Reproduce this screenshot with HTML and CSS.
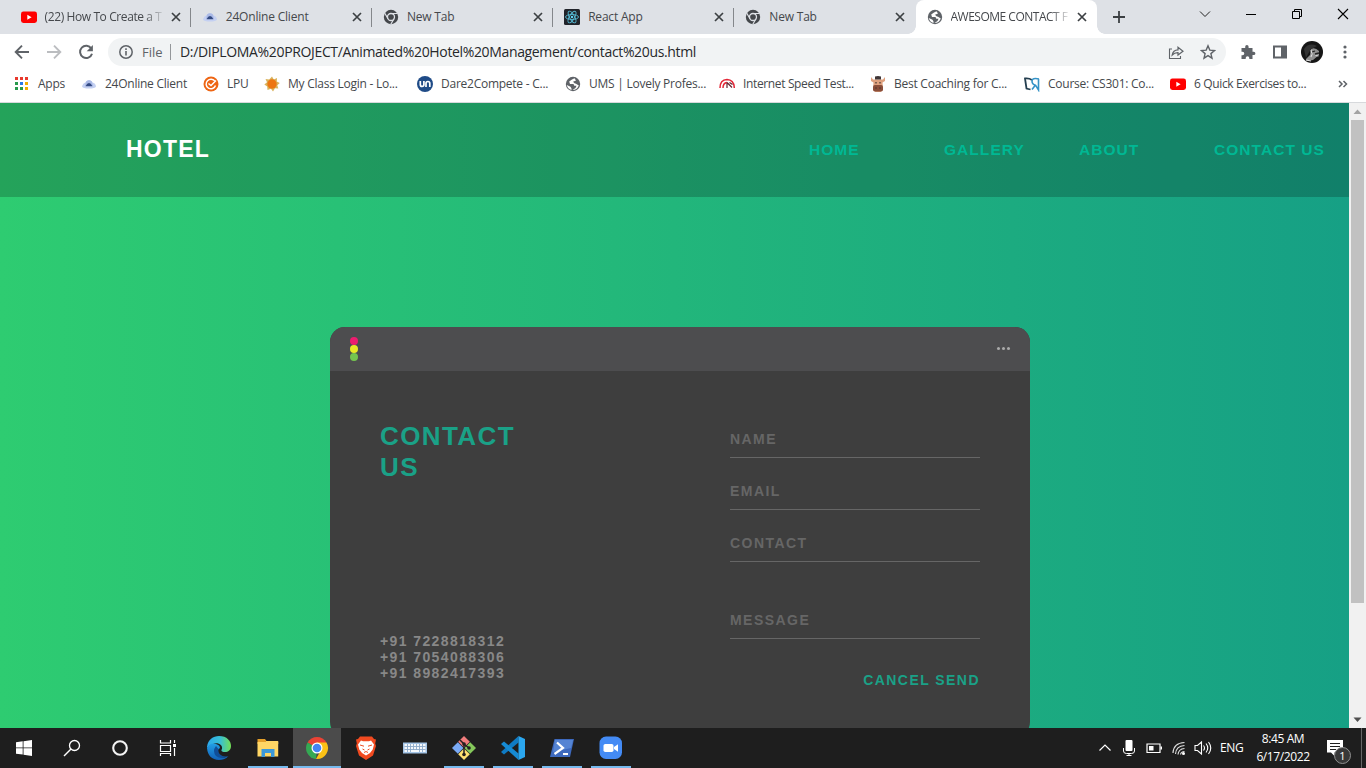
FILE: index.html
```html
<!DOCTYPE html>
<html lang="en">
<head>
<meta charset="utf-8">
<title>AWESOME CONTACT FORM</title>
<link rel="stylesheet" href="styles.css">
</head>
<body>
<svg width="0" height="0" class="defs">
  <defs>
    <symbol id="youtube" viewBox="0 0 16 16"><rect y="2.5" width="16" height="11.5" rx="2.4" fill="#f00"/><path d="M6.3 5.8v5l4.3-2.5z" fill="#fff"/></symbol>
    <symbol id="cloud" viewBox="0 0 16 16"><path d="M1 10.5Q2 7 4.500 6.500Q8 1.500 11.500 6.500Q14.500 7 15 10.500Q14 12.500 8 12.500Q2 12.500 1 10.500z" fill="#c4d0f2"/><path d="M5 5.500Q8 3 11 5.500L12 10H4z" fill="#aab9e6"/><path d="M4.500 10.200Q8 4 11.500 10.200z" fill="#334a83"/></symbol>
    <symbol id="chromegrey" viewBox="0 0 16 16"><circle cx="8" cy="8" r="7.200" fill="#44474b"/><circle cx="8" cy="8" r="3.500" fill="none" stroke="#dee1e6" stroke-width="1.300"/><path d="M8 4.500h6.500M5 9.700L1.800 4.200M11 9.700L7.800 15.200" stroke="#dee1e6" stroke-width="1.200"/></symbol>
    <symbol id="globe" viewBox="0 0 16 16"><circle cx="8" cy="8" r="7.200" fill="#5f6368"/><path d="M9.500 2.200L7 3.500 4.200 5.600 5 8H8.500L9.300 9.800H11.500L10.500 12 7.500 14Q12 14 13.800 9.500L11 7.800 9.500 7.200 8 5.800 11 4.500zM1.800 9L5.500 10.700 6.500 12.500V14Q2.600 13 1.800 9z" fill="#fff"/></symbol>
    <symbol id="close" viewBox="0 0 16 16"><path d="M4 4l8 8M12 4l-8 8" stroke="#3c4043" stroke-width="1.700"/></symbol>
  </defs>
</svg>

<header class="tabstrip">
  <div class="tab"><svg class="fav"><use href="#youtube"/></svg><span class="tabtitle fade">(22) How To Create a T</span><svg class="close"><use href="#close"/></svg></div>
  <div class="tab"><svg class="fav"><use href="#cloud"/></svg><span class="tabtitle">24Online Client</span><svg class="close"><use href="#close"/></svg></div>
  <div class="tab"><svg class="fav"><use href="#chromegrey"/></svg><span class="tabtitle">New Tab</span><svg class="close"><use href="#close"/></svg></div>
  <div class="tab"><svg class="fav" viewBox="0 0 16 16"><rect width="16" height="16" rx="1.500" fill="#20232a"/><g fill="none" stroke="#55b9d3" stroke-width=".9"><ellipse cx="8" cy="8" rx="6.500" ry="2.500"/><ellipse cx="8" cy="8" rx="6.500" ry="2.500" transform="rotate(60 8 8)"/><ellipse cx="8" cy="8" rx="6.500" ry="2.500" transform="rotate(120 8 8)"/></g><circle cx="8" cy="8" r="1.200" fill="#61dafb"/></svg><span class="tabtitle">React App</span><svg class="close"><use href="#close"/></svg></div>
  <div class="tab last"><svg class="fav"><use href="#chromegrey"/></svg><span class="tabtitle">New Tab</span><svg class="close"><use href="#close"/></svg></div>
  <div class="tab active"><svg class="fav"><use href="#globe"/></svg><span class="tabtitle fade">AWESOME CONTACT F</span><svg class="close"><use href="#close"/></svg></div>
  <svg class="newtab" viewBox="0 0 16 16"><path d="M8 2v12M2 8h12" stroke="#3c4043" stroke-width="1.800"/></svg>
  <div class="winbtns">
    <svg viewBox="0 0 16 16"><path d="M3 5.500l5 5 5-5" fill="none" stroke="#222" stroke-width="1"/></svg>
    <svg viewBox="0 0 16 16"><path d="M3 8.500h10" stroke="#000" stroke-width="1"/></svg>
    <svg viewBox="0 0 16 16"><path d="M3.500 5.500h7v7h-7zM5.500 5.500v-2h7v7h-2" fill="none" stroke="#000"/></svg>
    <svg viewBox="0 0 16 16"><path d="M3 3l10 10M13 3L3 13" stroke="#000" stroke-width="1.100"/></svg>
  </div>
</header>

<nav class="toolbar">
  <svg class="navicon" viewBox="0 0 16 16"><path d="M15 8H2M8 1.700L1.700 8 8 14.300" fill="none" stroke="#5f6368" stroke-width="1.900"/></svg>
  <svg class="navicon" viewBox="0 0 16 16"><path d="M1 8h13M8 1.700L14.300 8 8 14.300" fill="none" stroke="#bbbdc0" stroke-width="1.900"/></svg>
  <svg class="navicon" viewBox="0 0 16 16"><path d="M13.300 4.600A6.100 6.100 0 1 0 14 9.700" fill="none" stroke="#5f6368" stroke-width="2"/><path d="M14.900 1v6.200H8.700z" fill="#5f6368"/></svg>
  <div class="omnibox">
    <svg class="info" viewBox="0 0 16 16"><circle cx="8" cy="8" r="6.200" fill="none" stroke="#5f6368" stroke-width="1.500"/><path d="M8 7v4.500M8 4.300v1.600" stroke="#5f6368" stroke-width="1.600"/></svg>
    <span class="scheme">File</span><span class="url">D:/DIPLOMA%20PROJECT/Animated%20Hotel%20Management/contact%20us.html</span>
    <svg class="share" viewBox="0 0 16 16"><path d="M4 5H1.500v9.500h11V12" fill="none" stroke="#5f6368" stroke-width="1.100"/><path d="M4.200 11Q5 6 10 5.800V3.200L15 7.200 10 11V8.600Q6.500 8.500 4.200 11z" fill="none" stroke="#5f6368" stroke-width="1.200"/></svg>
    <svg class="star" viewBox="0 0 16 16"><path d="M8 1.800l1.800 4.300 4.700.4-3.600 3.100 1.100 4.600L8 11.700l-4 2.500 1.100-4.600L1.500 6.500l4.700-.4z" fill="none" stroke="#5f6368" stroke-width="1.400"/></svg>
  </div>
  <svg class="ext" viewBox="0 0 16 16"><path d="M1.500 4h3.700V2.800a1.700 1.700 0 0 1 3.400 0V4h3.900v3.700h1.200a1.700 1.700 0 0 1 0 3.400h-1.200V15H9.300v-1a1.800 1.800 0 0 0-3.600 0v1H1.500v-3.700h1a1.800 1.800 0 0 0 0-3.600h-1z" fill="#5f6368"/></svg>
  <svg class="panel" viewBox="0 0 16 16"><path d="M2 2.500h12v11H2z" fill="none" stroke="#5f6368" stroke-width="2"/><path d="M9 2h5v12H9z" fill="#5f6368"/></svg>
  <svg class="avatar" viewBox="0 0 22 22"><circle cx="11" cy="11" r="11" fill="#161616"/><path d="M10 8Q14 6 18 10L18 14 12 19 6 20 5 18 9 14z" fill="#8f8f8f"/><path d="M3 8Q8 1 16 5L10 8 7 13 5 17z" fill="#333"/><path d="M11 11l3-1M14 13l4-1" stroke="#222" stroke-width="1.300"/><path d="M10 9l1 4-1 3M14.500 14.500l3 .5M5 19l5 1" stroke="#ddd" stroke-width="1.200"/></svg>
  <svg class="menu" viewBox="0 0 16 16"><g fill="#5f6368"><circle cx="8" cy="3" r="1.600"/><circle cx="8" cy="8" r="1.600"/><circle cx="8" cy="13" r="1.600"/></g></svg>
</nav>

<nav class="bookmarks">
  <a><svg class="fav" viewBox="0 0 16 16"><path d="M1 1h3v3H1zM6 1h3v3H6zM11 1h3v3h-3z" fill="#e8392d"/><path d="M1 6h3v3H1zM1 11h3v3H1zM6 11h3v3H6z" fill="#28994b"/><path d="M6 6h3v3H6z" fill="#2878e8"/><path d="M11 6h3v3h-3zM11 11h3v3h-3z" fill="#f2ac00"/></svg><span>Apps</span></a>
  <a><svg class="fav"><use href="#cloud"/></svg><span>24Online Client</span></a>
  <a><svg class="fav" viewBox="0 0 16 16"><circle cx="8" cy="8" r="7.500" fill="#ee6513"/><path d="M12 5.500A4.800 4.800 0 1 0 12.500 9.500M5.500 7.500l2.500 2 5-5" fill="none" stroke="#fff" stroke-width="1.500"/></svg><span>LPU</span></a>
  <a><svg class="fav" viewBox="0 0 16 16"><path d="M8 .5l1.800 3L13 2l-.2 3.500 3 1.500-2.500 2.200 1 3.300-3.300-.2L9 15.500l-2-2.700L3.500 14l-.3-3.500L.3 8.500 3 6.300 1.500 3l3.700.5z" fill="#d9b25b"/><circle cx="8" cy="8" r="4.700" fill="#ed7612"/></svg><span>My Class Login - Lo...</span></a>
  <a><svg class="fav" viewBox="0 0 16 16"><circle cx="8" cy="8" r="8" fill="#1f4b87"/><path d="M3.300 5v3.500q0 2 1.800 2t1.800-2V5M9 11V7.500q0-2 1.900-2t1.900 2V11" fill="none" stroke="#fff" stroke-width="1.700"/></svg><span>Dare2Compete - C...</span></a>
  <a><svg class="fav"><use href="#globe"/></svg><span>UMS | Lovely Profes...</span></a>
  <a class="tight"><svg class="fav" viewBox="0 0 16 16"><path d="M1 12Q1 4 8 3.600 15 4 15.300 12M4 12Q4 7 8 6.500" fill="none" stroke="#e32636" stroke-width="1.500"/><path d="M8 6.500l5 5M8 7v5M10.500 6.500l3 2" stroke="#662530" stroke-width="1.200"/></svg><span>Internet Speed Test...</span></a>
  <a><svg class="fav" viewBox="0 0 16 16"><path d="M1 1l2 2.500h10L15 1v4l-2.500 1.500L13 14l-2.500 2h-5L3 14l.500-7.500L1 5z" fill="#dfa17f"/><path d="M5 .5q3-1 6 0v3H5z" fill="#403637"/><rect x="3" y="9" width="10" height="6.500" rx="2" fill="#8a4e3a"/><path d="M6 6v1.500M10 6v1.500M5.500 12h1M9.500 12h1" stroke="#222"/></svg><span>Best Coaching for C...</span></a>
  <a><svg class="fav" viewBox="0 0 16 16"><path d="M8 4Q5 2 1 2.500L2.500 12.500 6.500 13.500" fill="none" stroke="#253f50" stroke-width="1.800"/><path d="M15 3Q8 1.500 8 5t3.500 4.200L14.500 14V3M11.500 9L8 13.500" fill="none" stroke="#3593c7" stroke-width="1.600"/></svg><span>Course: CS301: Co...</span></a>
  <a class="tight"><svg class="fav"><use href="#youtube"/></svg><span>6 Quick Exercises to...</span></a>
  <svg class="more" viewBox="0 0 10 10"><path d="M1 2l3 3-3 3M5.500 2l3 3-3 3" fill="none" stroke="#5f6368" stroke-width="1.500"/></svg>
</nav>

<div class="viewport">
  <main class="page">
    <div class="sitebar">
      <div class="brand">HOTEL</div>
      <div class="links"><a>HOME</a><a>GALLERY</a><a>ABOUT</a><a>CONTACT US</a></div>
    </div>
    <section class="card">
      <div class="cardbar">
        <div class="lights"><i class="pink"></i><i class="yellow"></i><i class="green"></i></div>
        <div class="dots"><i></i><i></i><i></i></div>
      </div>
      <div class="cardbody">
        <div class="left">
          <h1>CONTACT<br>US</h1>
          <p>+91 7228818312<br>+91 7054088306<br>+91 8982417393</p>
        </div>
        <div class="form">
          <div class="field">NAME</div>
          <div class="field">EMAIL</div>
          <div class="field">CONTACT</div>
          <div class="field message">MESSAGE</div>
          <div class="buttons"><span>CANCEL</span> <span>SEND</span></div>
        </div>
      </div>
    </section>
  </main>
  <div class="scrollbar">
    <svg viewBox="0 0 17 17"><path d="M4.500 11L8.500 6.500 12.500 11z" fill="#a3a3a3"/></svg>
    <div class="thumb"></div>
    <svg viewBox="0 0 17 17"><path d="M4.500 6.500L8.500 11 12.500 6.500z" fill="#505050"/></svg>
  </div>
</div>

<footer class="taskbar">
  <div class="sys">
    <svg viewBox="0 0 24 24"><path d="M4 6.300l6.700-1v6.200H4zM11.500 5.200L20 4v7.500h-8.500zM4 12.300h6.700v6.300L4 17.700zM11.500 12.300H20V20l-8.500-1.200z" fill="#fff"/></svg>
    <svg viewBox="0 0 24 24"><circle cx="14.500" cy="9.500" r="5" fill="none" stroke="#fff" stroke-width="1.300"/><path d="M11 13l-7 7" stroke="#fff" stroke-width="1.400"/></svg>
    <svg viewBox="0 0 24 24"><circle cx="12" cy="12" r="6.800" fill="none" stroke="#f4f4f4" stroke-width="2.100"/></svg>
    <svg viewBox="0 0 24 24"><path d="M4.500 4v3h10V4M4.500 9.500h10v6h-10zM4.500 20v-2.500h10V20M18.500 4v3M18.500 12v8" fill="none" stroke="#fff" stroke-width="1.200"/><path d="M17 8h3v3h-3z" fill="#fff"/></svg>
  </div>
  <div class="apps">
    <div class="app"><svg viewBox="0 0 24 24"><defs><linearGradient id="eg" x1="0" x2="1"><stop offset="0" stop-color="#2ba8ed"/><stop offset=".55" stop-color="#38bfd5"/><stop offset="1" stop-color="#73df55"/></linearGradient><linearGradient id="eb" x1="0" y1="0" x2="0" y2="1"><stop offset="0" stop-color="#229fe5"/><stop offset="1" stop-color="#1160b8"/></linearGradient></defs><path d="M0 11C1 3.500 6 0 12 0c8 0 12 5 12 10 0 4-3 6-6 6-4 0-4-2-3-3 1-4-4-7-9-5Q2 9 0 12z" fill="url(#eg)"/><path d="M0 12Q3 6 9 8q4 1 4 4-4 2-2 6 2 5 8 3 2-.5 2.500-1Q18 24 12 24 1 23.500 0 12z" fill="url(#eb)"/><path d="M9 10q-4 5 0 10 5 4 12.500 0c-5 1.500-11-1-10-7z" fill="#104e98"/></svg></div>
    <div class="app open"><svg viewBox="0 0 24 24"><path d="M1.500 3H9l1.500 2v3h-9z" fill="#e5a02a"/><path d="M10 5h12.200v3H10z" fill="#ffd665"/><path d="M1.500 6h20.700v14.500H1.500z" fill="#ffd665"/><path d="M5.500 13h13v8h-3.500v-4H9v4H5.500z" fill="#3b98d9"/></svg></div>
    <div class="app open current"><svg viewBox="0 0 24 24"><path d="M12 12L2.500 6.500A11 11 0 0 1 21.500 6.500z" fill="#ea4335"/><path d="M12 12l-1 11A11 11 0 0 1 2.500 6.500z" fill="#34a853"/><path d="M12 12V6.500h9.500A11 11 0 0 1 11 23l5-9z" fill="#fbc116"/><circle cx="12" cy="12" r="5.500" fill="#fff"/><circle cx="12" cy="12" r="4.300" fill="#4285f4"/></svg></div>
    <div class="app"><svg viewBox="0 0 24 24"><path d="M6 .5h12l2 2.500 2 .5-.8 4L22 10l-3 9.500L12 24l-7-4.500L2 10l.8-2.500L2 3.500l2-.5z" fill="#f14a20"/><path d="M7 4.500l2 .7h6l2-.7L20 8.500l-1.300 5L16 17l-4 2.500L8 17l-2.700-3.500L4 8.500z" fill="#fff"/><path d="M6 9l4 1.200M18 9l-4 1.200M8.500 13l2 1M15.500 13l-2 1M10 16.500l2-1 2 1" fill="none" stroke="#ee4c22" stroke-width="1"/></svg></div>
    <div class="app"><svg viewBox="0 0 24 24"><path d="M0 6.500h24v11H0z" fill="#a3c4e6"/><path d="M1.500 8h21v8h-21z" fill="#f4f8fc"/><path d="M1.500 10.500h21M1.500 13.500h21M4.500 8v8M7.500 8v8M10.500 8v6M13.500 8v6M16.500 8v8M19.500 8v8" stroke="#8ca9c9" stroke-width=".9"/></svg></div>
    <div class="app open"><svg viewBox="0 0 24 24"><path d="M12 0l5.800 5.800L12 11.500 6.200 5.800z" fill="#f17c7c"/><path d="M5.800 6.200l5.700 5.800-5.700 5.800L0 12z" fill="#7aa9f5"/><path d="M18.200 6.200L24 12l-5.800 5.800-5.700-5.800z" fill="#85c85b"/><path d="M12 12.500l5.800 5.700L12 24l-5.800-5.800z" fill="#ffe071"/><path d="M8 4l4 4v11M12 8l5 4" fill="none" stroke="#241f20" stroke-width="1.500"/><circle cx="12" cy="8" r="1.800" fill="#241f20"/><circle cx="12" cy="18.500" r="1.800" fill="#241f20"/><circle cx="17" cy="12" r="1.800" fill="#241f20"/></svg></div>
    <div class="app open"><svg viewBox="0 0 24 24"><path d="M17.500 0v6.500L3 18.500 0 16z" fill="#0f7bc4"/><path d="M3 5.500L17.500 17.500V24L0 8z" fill="#168bd4"/><path d="M17.500 0L24 3v18l-6.500 3z" fill="#2ba7ef"/></svg></div>
    <div class="app open"><svg viewBox="0 0 24 24"><path d="M4.500 3H24l-4 18H0z" fill="#3d69be"/><path d="M5 4h18l-2 8-18 4z" fill="#5584d3"/><path d="M7 6.500l6 5.500-8.500 6M13 18h5" fill="none" stroke="#fff" stroke-width="2.200"/></svg></div>
    <div class="app open"><svg viewBox="0 0 24 24"><rect x=".5" y=".5" width="22.500" height="22.500" rx="6.500" fill="#448bf5"/><rect x="4.500" y="8" width="10" height="8" rx="1.800" fill="#fff"/><path d="M15 11l4-2.800v7.600L15 13z" fill="#fff"/></svg></div>
  </div>
  <div class="tray">
    <svg class="t1" viewBox="0 0 16 16"><path d="M2.500 10.500L8 5l5.500 5.500" fill="none" stroke="#fff" stroke-width="1.200"/></svg>
    <svg class="t2" viewBox="0 0 16 16"><rect x="4.500" y="0" width="7" height="11" rx="1" fill="#fff"/><path d="M2.500 8v3q0 2.500 3 2.500h5q3 0 3-2.500V8M8 13.500V16M5.500 15.500h5" fill="none" stroke="#fff"/></svg>
    <svg class="t3" viewBox="0 0 16 16"><path d="M1 4h13v8.500H1z" fill="none" stroke="#fff" stroke-width="1.200"/><path d="M3 6h4.500v4.500H3zM14.500 6.500H16v3h-1.500z" fill="#fff"/></svg>
    <svg class="t4" viewBox="0 0 16 16"><g fill="none" stroke="#ddd" stroke-width="1.200"><path d="M2 13Q2.500 3 13.500 2.500M4.500 14Q5 6 13.500 5.500M7 14.500Q7.500 9 13.500 8.500M9.500 14.500Q10 11.500 13.500 11.500"/></g><circle cx="12.500" cy="13.500" r="1.500" fill="#fff"/></svg>
    <svg class="t5" viewBox="0 0 18 16"><path d="M1 5.500h2.500L7.500 2v12l-4-3.500H1zM9.500 5.500q2 2.500 0 5M12 3.500q3.500 4.500 0 9M14.500 2q4.500 6 0 12" fill="none" stroke="#fff" stroke-width="1.100"/></svg>
    <span class="lang">ENG</span>
    <div class="clock"><span class="time">8:45 AM</span><span class="date">6/17/2022</span></div>
    <div class="notice"><svg viewBox="0 0 16 16"><path d="M0 0h16v12.500H7.500V16L4 12.500H0z" fill="#fff"/><path d="M3 3.500h10M3 6.500h10M3 9.500h6" stroke="#1e1e1e" stroke-width="1.100"/></svg><b>1</b></div>
    <div class="peek"></div>
  </div>
</footer>
</body>
</html>
```
FILE: styles.css
```css
* { box-sizing: border-box; }
body {
  margin: 0; width: 1366px; height: 768px; overflow: hidden;
  display: flex; flex-direction: column;
  font: 12px/16px "Open Sans", "Noto Sans", sans-serif; color: #45484c;
  background: #fff;
}
svg { display: block; flex: none; }
.defs { position: absolute; }
.fav { width: 16px; height: 16px; }

.tabstrip { height: 34px; flex: none; display: flex; background: #dee1e6; padding-left: 9.600px; }
.tab { width: 181.2px; flex: none; display: flex; align-items: center; padding: 0 7px 0 11px; position: relative; }
.tab:not(.last):not(.active)::after { content: ""; position: absolute; right: 0; top: 8px; width: 1px; height: 19px; background: #84878b; }
.tab.active { background: #fff; border-radius: 8px 8px 0 0; }
.tab.active::before, .tab.active::after { content: ""; position: absolute; bottom: 0; width: 8px; height: 8px; }
.tab.active::before { left: -8px; background: radial-gradient(circle at 0 0, #dee1e6 7.500px, #fff 8px); }
.tab.active::after { right: -8px; background: radial-gradient(circle at 100% 0, #dee1e6 7.500px, #fff 8px); }
.tabtitle { flex: none; margin-left: 8px; width: 118px; white-space: nowrap; letter-spacing: -.2px; }
.active .tabtitle { letter-spacing: -.5px; }
.fade { -webkit-mask-image: linear-gradient(90deg, #000 84%, transparent 102%); mask-image: linear-gradient(90deg, #000 84%, transparent 102%); }
.tab:first-child .tabtitle { letter-spacing: -.4px; }
.close { width: 16px; height: 16px; margin-left: 5px; }
.newtab { width: 16px; height: 16px; margin: 9px 0 0 14.500px; }
.winbtns { display: flex; margin-left: auto; gap: 30px; padding: 6px 15px 0 0; }
.winbtns svg { width: 16px; height: 16px; }

.toolbar { height: 36px; flex: none; display: flex; align-items: center; padding-left: 14px; }
.navicon { width: 16px; height: 16px; margin-right: 16px; }
.omnibox { width: 1118px; height: 28px; margin-left: -2px; border-radius: 14px; background: #f1f3f4; display: flex; align-items: center; padding: 0 10px; }
.info { width: 16px; height: 16px; }
.scheme { margin-left: 8px; width: 29px; border-right: 1px solid #94979a; font-size: 13px; color: #5f6368; }
.url { margin-left: 9px; color: #26282b; font-size: 14px; letter-spacing: -.35px; white-space: nowrap; }
.share { width: 16px; height: 16px; margin-left: auto; }
.star { width: 16px; height: 16px; margin-left: 16px; }
.ext { width: 16px; height: 16px; margin-left: 14px; }
.panel { width: 16px; height: 16px; margin-left: 16px; }
.avatar { width: 22px; height: 22px; margin-left: 13px; }
.menu { width: 16px; height: 16px; margin-left: 14px; }

.bookmarks { height: 33px; flex: none; border-bottom: 1px solid #d7d9dc; display: grid; grid-template-columns: 67px 122px 61px 153px 148px 154px 151px 154px 146px 168px 10px; padding: 0 0 4px 14px; align-items: center; letter-spacing: -.25px; }
.bookmarks a { display: flex; gap: 8px; white-space: nowrap; }
.bookmarks .tight { letter-spacing: -.36px; }
.more { width: 10px; height: 10px; }

.viewport { height: 625px; flex: none; display: flex; overflow: hidden; }
.page { width: 1349px; height: 625px; background: linear-gradient(to right, #2ecc71, #16a085); font-family: "Liberation Sans", Arial, sans-serif; font-weight: bold; overflow: hidden; }
.sitebar { height: 94px; background: rgba(0, 0, 0, .2); display: flex; align-items: center; justify-content: space-between; }
.brand { margin-left: 126px; margin-bottom: 2px; color: #fff; font-size: 23px; line-height: 28px; letter-spacing: 1.200px; }
.links { display: grid; grid-template-columns: repeat(4, 135px); color: #00b894; font-size: 15.500px; letter-spacing: 1.050px; line-height: 18px; white-space: nowrap; }
.card { width: 700px; height: 410px; margin: 130px 0 0 330px; border-radius: 15px; overflow: hidden; background: #3e3e3e; }
.cardbar { height: 44px; background: #4d4d4f; display: flex; justify-content: space-between; align-items: center; padding: 0 20px; }
.lights i { display: block; width: 8px; height: 8px; border-radius: 50%; }
.pink { background: #ed1c6f; }
.yellow { background: #e8e925; }
.green { background: #74c54f; }
.dots { display: flex; gap: 2px; margin-bottom: 1px; }
.dots i { width: 3px; height: 3px; border-radius: 1.500px; background: #aaa; }
.cardbody { display: flex; padding: 49px 50px 0; letter-spacing: 1.450px; font-size: 14px; }
.left { width: 350px; height: 261px; padding-top: 1px; display: flex; flex-direction: column; justify-content: space-between; color: #888; }
.left h1 { margin: 0; font-size: 26px; line-height: 31px; letter-spacing: 1.400px; color: #1aa187; }
.left p { margin: 0; line-height: 16px; letter-spacing: 1.400px; }
.form { width: 250px; }
.field { height: 38px; margin-bottom: 14px; padding-top: 11px; border-bottom: 1px solid #666; color: #666; }
.field.message { margin-top: 39px; }
.buttons { text-align: right; margin-top: 33px; color: #1aa187; white-space: nowrap; }

.scrollbar { width: 17px; background: #f1f1f1; display: flex; flex-direction: column; }
.scrollbar svg { width: 17px; height: 17px; }
.thumb { width: 13px; height: 483px; margin: 0 0 108px 2px; background: #c1c1c1; }

.taskbar { height: 40px; flex: none; background: #1e1e1e; color: #fff; display: flex; }
.sys { display: flex; width: 195px; }
.sys svg { width: 24px; height: 24px; margin: 8px 12px; }
.apps { display: flex; gap: 1px; }
.app { width: 48px; height: 40px; padding: 8px 12px; position: relative; }
.app svg { width: 24px; height: 24px; }
.open::after { content: ""; position: absolute; left: 4px; right: 4px; bottom: 0; height: 2px; background: #76b9ed; }
.current { background: #4b4b4b; }
.current::after { left: 0; right: 0; }
.tray { margin-left: auto; display: flex; align-items: center; }
.tray svg { width: 16px; height: 16px; }
.tray .t2 { margin-left: 8px; }
.tray .t3 { margin-left: 9px; }
.tray .t4 { margin-left: 9px; }
.tray .t5 { margin-left: 7px; width: 18px; }
.lang { width: 24px; margin-left: 8px; letter-spacing: -.4px; }
.clock { width: 54px; margin-left: 12px; display: flex; flex-direction: column; align-items: center; line-height: 18px; white-space: nowrap; letter-spacing: -.4px; }
.notice { width: 24px; height: 40px; margin-left: 17px; padding-top: 12px; position: relative; }
.notice b { position: absolute; left: 7px; top: 19px; width: 17px; height: 17px; border: 1px solid #909090; border-radius: 50%; background: #383838; text-align: center; font-size: 11px; line-height: 15px; font-weight: 400; }
.peek { width: 5px; height: 40px; margin-left: 10px; border-left: 1px solid #666; }
```
